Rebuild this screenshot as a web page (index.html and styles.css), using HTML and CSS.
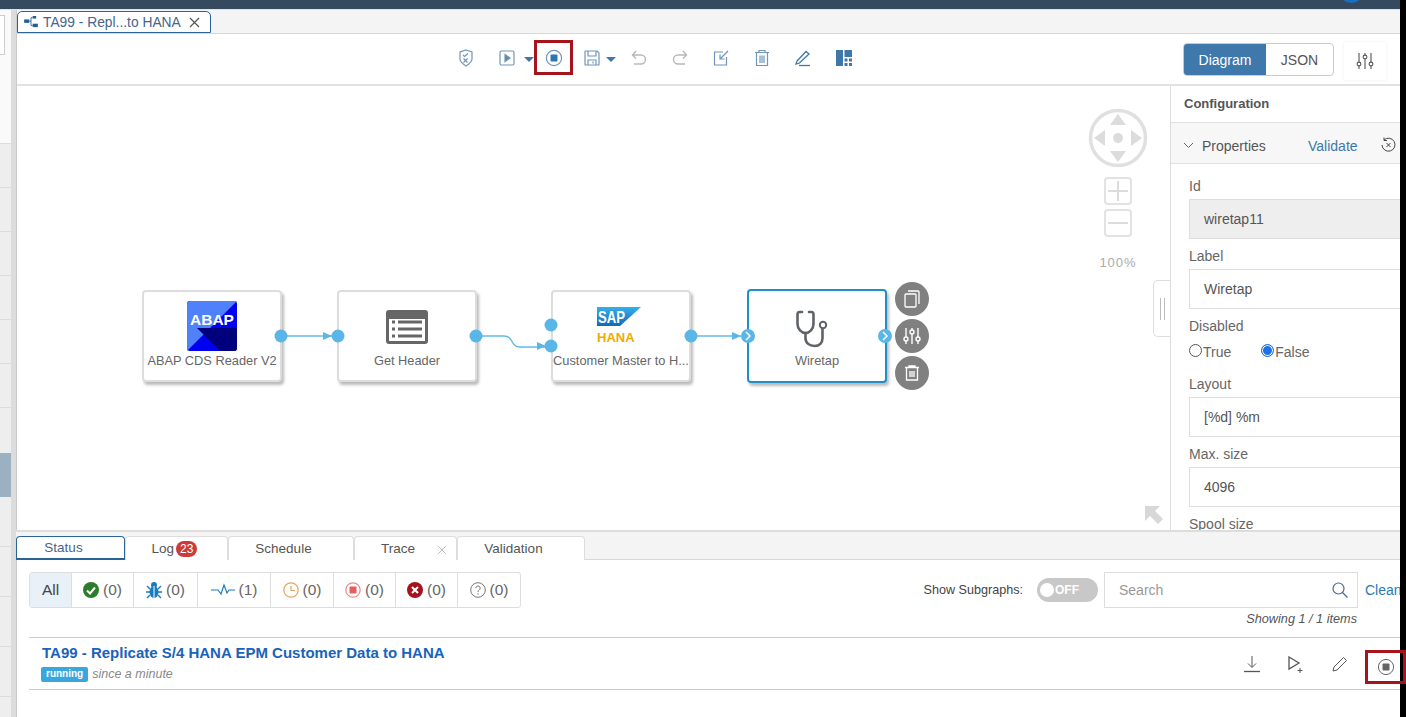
FILE: index.html
```html
<!DOCTYPE html>
<html lang="en">
<head>
<meta charset="UTF-8" />
<title>TA99 - Modeler</title>
<link rel="stylesheet" href="styles.css">
</head>
<body>
<div class="page">
  <div class="app">
    <div class="topbar"><span class="avatar"></span></div>
    <div class="workspace">
      <aside class="sidebar">
        <div class="side-row side-first"><span class="side-box"></span></div>
        <div class="side-row"></div>
        <div class="side-row"></div>
        <div class="side-row"></div>
        <div class="side-row"></div>
        <div class="side-row"></div>
        <div class="side-row"></div>
        <div class="side-row side-plain"></div>
        <div class="side-row side-selected"></div>
        <div class="side-row side-tall"></div>
        <div class="side-row side-tall"></div>
        <div class="side-row side-tall"></div>
        <div class="side-row side-tall"></div>
      </aside>
      <main class="main">
        <div class="doc-tabs">
          <div class="doc-tab">
            <svg class="doc-icon" width="14" height="12" viewBox="0 0 16 14"><rect x="0" y="4" width="6" height="4" fill="#1f5f99"/><rect x="10" y="0" width="4" height="3" fill="#1f5f99"/><rect x="10" y="9" width="6" height="4" fill="#1f5f99"/><path d="M6 6h2V2h2M8 6v5h2" fill="none" stroke="#1f5f99"/></svg>
            <span class="doc-title">TA99 - Repl...to HANA</span>
            <svg width="11" height="11" viewBox="0 0 11 11"><path d="M1 1l9 9M10 1l-9 9" stroke="#555" stroke-width="1.2"/></svg>
          </div>
        </div>

        <div class="toolbar">
          <div class="tb-btn">
            <svg width="20" height="20" viewBox="0 0 20 20" fill="none" stroke="#7195b8" stroke-width="1.2"><path d="M10 2l6 2v7c0 3-3 5-6 7-3-2-6-4-6-7V4z"/><path d="M7 7l1.5 1.5L12 5.5M7.5 10.5l4 4M11.5 10.5l-4 4"/></svg>
          </div>
          <div class="tb-group tb-play">
            <svg width="18" height="18" viewBox="0 0 18 18" fill="none" stroke="#7195b8" stroke-width="1.2"><rect x="2" y="2" width="14" height="14" rx="1.5"/><path d="M7 5.5l5 3.5-5 3.5z" fill="#5b86ad"/></svg>
            <span class="caret"></span>
          </div>
          <div class="tb-stop">
            <svg width="18" height="18" viewBox="0 0 18 18"><circle cx="9" cy="9" r="7.6" fill="none" stroke="#7195b8" stroke-width="1.2"/><rect x="5.5" y="5.5" width="7" height="7" rx="1" fill="#2f74b0"/></svg>
          </div>
          <div class="tb-group tb-save">
            <svg width="18" height="18" viewBox="0 0 18 18" fill="none" stroke="#7195b8" stroke-width="1.2"><path d="M2.5 2h11.500l2 2v11.500a.5.5 0 0 1-.5.5h-13a.5.5 0 0 1-.5-.5V2.500a.5.5 0 0 1 .5-.5z"/><path d="M5 2v5h8V2M5 16v-5h8v5M10 12.500v2"/></svg>
            <span class="caret"></span>
          </div>
          <div class="tb-btn">
            <svg width="18" height="18" viewBox="0 0 18 18" fill="none" stroke="#b9b9b9" stroke-width="1.4"><path d="M6 2L2.500 6 6 9.500M2.500 6H11a4.500 4.500 0 0 1 0 9H4"/></svg>
          </div>
          <div class="tb-btn">
            <svg width="18" height="18" viewBox="0 0 18 18" fill="none" stroke="#b9b9b9" stroke-width="1.4"><path d="M12 2l3.500 4L12 9.500M15.500 6H7a4.500 4.500 0 0 0 0 9h7"/></svg>
          </div>
          <div class="tb-btn">
            <svg width="18" height="18" viewBox="0 0 18 18" fill="none" stroke="#7195b8" stroke-width="1.2"><path d="M11 3H2.500v13h12V8"/><path d="M16 2l-8 8M8 5.500V10h4.500"/></svg>
          </div>
          <div class="tb-btn">
            <svg width="18" height="18" viewBox="0 0 18 18" fill="none" stroke="#7195b8" stroke-width="1.2"><path d="M2 3.500h14M6 3.500V1.500h6v2M3.500 3.500v13h11v-13M7 6.500v7.500M9 6.500v7.500M11 6.500v7.500"/></svg>
          </div>
          <div class="tb-btn">
            <svg width="18" height="18" viewBox="0 0 18 18" fill="none" stroke="#3f78a8" stroke-width="1.3"><path d="M3 12l9-9.500 3 2.500-9.500 9L2 15z"/><path d="M5 16.500h11"/></svg>
          </div>
          <div class="tb-btn">
            <svg width="16" height="16" viewBox="0 0 16 16" fill="#3f78a8"><rect x="0" y="0" width="7" height="16"/><rect x="8.500" y="0" width="7.500" height="7"/><rect x="8.500" y="8.500" width="3" height="3"/><rect x="13" y="8.500" width="3" height="3"/><rect x="8.500" y="13" width="3" height="3"/><rect x="13" y="13" width="3" height="3"/></svg>
          </div>
          <div class="tb-spacer"></div>
          <div class="view-switch">
            <span class="view-on">Diagram</span>
            <span class="view-off">JSON</span>
          </div>
          <div class="tb-settings">
            <svg width="18" height="18" viewBox="0 0 18 18" fill="none" stroke="#555" stroke-width="1.1"><path d="M3 1v9M3 14v3M9 1v2M9 7v10M15 1v9M15 14v3"/><circle cx="3" cy="12" r="1.900"/><circle cx="9" cy="5" r="1.900"/><circle cx="15" cy="12" r="1.900"/></svg>
          </div>
        </div>

        <div class="designer">
          <div class="canvas">
            <div class="node node-abap">
              <svg class="node-logo" width="50" height="50" viewBox="0 0 50 50">
                <rect width="50" height="50" rx="3" fill="#0000f0"/>
                <path d="M3 0h47L0 50V3a3 3 0 0 1 3-3z" fill="#4f82fa"/>
                <path d="M10 27H50V47a3 3 0 0 1-3 3H33z" fill="#00007c"/>
                <text x="25" y="24" class="abap-text">ABAP</text>
              </svg>
              <span class="node-label">ABAP CDS Reader V2</span>
            </div>
            <div class="node node-header">
              <svg class="node-logo" width="42" height="34" viewBox="0 0 42 34">
                <rect width="42" height="34" rx="3" fill="#666"/>
                <rect x="3" y="9" width="36" height="22" fill="#fff"/>
                <path d="M6 12h3M12 12h24M6 19h3M12 19h24M6 26h3M12 26h24" stroke="#666" stroke-width="3"/>
              </svg>
              <span class="node-label">Get Header</span>
            </div>
            <div class="node node-hana">
              <svg class="node-logo" width="46" height="37" viewBox="0 0 46 37">
                <defs><linearGradient id="sapblue" x1="0" y1="0" x2="0" y2="1"><stop offset="0" stop-color="#35b0ea"/><stop offset="1" stop-color="#1268b8"/></linearGradient></defs>
                <path d="M0 0h44L23 19H0z" fill="url(#sapblue)"/>
                <text x="1" y="16" class="sap-text" textLength="27" lengthAdjust="spacingAndGlyphs">SAP</text>
                <text x="0" y="35" class="hana-text">HANA</text>
              </svg>
              <span class="node-label">Customer Master to H...</span>
            </div>
            <div class="node node-wiretap">
              <svg class="node-logo" width="36" height="38" viewBox="0 0 36 38" fill="none" stroke="#5f6368" stroke-width="2.600" stroke-linecap="round"><path d="M6 2H3.500C2 2 1.500 3 1.500 4.500V14c0 5 4 9 8 9s8-4 8-9V4.500C17.500 3 17 2 15.500 2H13"/><path d="M9.500 23v5c0 5 4 8 9 8s8-3 8-8v-9"/><circle cx="27" cy="15" r="3.200" stroke-width="2"/></svg>
              <span class="node-label">Wiretap</span>
            </div>

            <svg class="links" width="1153" height="444" viewBox="17 86 1153 444">
              <g fill="none" stroke="#62bbe6" stroke-width="1.500">
                <path d="M281 336H332"/>
                <path d="M476 336h28c10 0 6 11 16 11h26"/>
                <path d="M691 336H741"/>
              </g>
              <g fill="#5ab6e6">
                <path d="M323 332l9 4-9 4z"/>
                <path d="M537 342l9 4-9 4z"/>
                <path d="M732 332l9 4-9 4z"/>
                <circle cx="281" cy="336" r="6.500"/>
                <circle cx="338" cy="336" r="6.500"/>
                <circle cx="476" cy="336" r="6.500"/>
                <circle cx="551" cy="325" r="6.500"/>
                <circle cx="551" cy="346" r="6.500"/>
                <circle cx="691" cy="336" r="6.500"/>
                <circle cx="748" cy="336" r="7"/>
                <circle cx="885" cy="336" r="7"/>
              </g>
              <path d="M746 332l4 4-4 4M883 332l4 4-4 4" fill="none" stroke="#fff" stroke-width="1.500"/>
            </svg>

            <div class="node-actions">
              <span class="node-action"><svg width="20" height="20" viewBox="0 0 20 20" fill="none" stroke="#fff" stroke-width="1.300"><rect x="3" y="5" width="11" height="13" rx="1"/><path d="M6 2h10a1 1 0 0 1 1 1v12"/></svg></span>
              <span class="node-action"><svg width="20" height="20" viewBox="0 0 20 20" fill="none" stroke="#fff" stroke-width="1.400"><path d="M4 2v9M4 15v3M10 2v2M10 8v10M16 2v9M16 15v3"/><circle cx="4" cy="13" r="2"/><circle cx="10" cy="6" r="2"/><circle cx="16" cy="13" r="2"/></svg></span>
              <span class="node-action"><svg width="20" height="20" viewBox="0 0 20 20" fill="none" stroke="#fff" stroke-width="1.300"><path d="M3 4.500h14M7 4.500V3h6v1.500M4.500 4.500V17h11V4.500M8 8v6M10 8v6M12 8v6"/></svg></span>
            </div>

            <div class="nav-control">
              <svg width="60" height="60" viewBox="0 0 60 60"><circle cx="30" cy="30" r="27.500" fill="#fff" stroke="#e0e0e0" stroke-width="3.500"/><path d="M30 6l8 11H22zM30 54l8-11H22zM6 30l11-8v16zM54 30l-11-8v16z" fill="#dcdcdc"/><circle cx="30" cy="30" r="5" fill="#dcdcdc"/></svg>
              <span class="zoom-btn"><svg width="20" height="20" viewBox="0 0 20 20"><path d="M10 0v20M0 10h20" stroke="#dcdcdc" stroke-width="2"/></svg></span>
              <span class="zoom-btn"><svg width="20" height="20" viewBox="0 0 20 20"><path d="M0 10h20" stroke="#dcdcdc" stroke-width="2"/></svg></span>
              <span class="zoom-pct">100%</span>
            </div>

            <svg class="fit-arrow" width="18" height="18" viewBox="0 0 18 18"><path d="M0 0h15l-5 5 8 8-5 5-8-8-5 5z" fill="#d8d8d8"/></svg>
            <div class="panel-handle"><i></i><i></i></div>
          </div>

          <div class="config">
            <div class="config-title">Configuration</div>
            <div class="config-head">
              <svg width="11" height="7" viewBox="0 0 11 7"><path d="M1 1l4.500 4.500L10 1" fill="none" stroke="#666" stroke-width="1"/></svg>
              <span class="config-props">Properties</span>
              <span class="config-validate">Validate</span>
              <svg width="17" height="17" viewBox="0 0 17 17" fill="none" stroke="#444" stroke-width="1"><path d="M4 3a6.500 6.500 0 1 1-2 5M4 .5V3.500h3M6.500 6l4 4M10.500 6l-4 4"/></svg>
            </div>
            <div class="form">
              <label class="f-label">Id</label>
              <div class="f-input f-readonly">wiretap11</div>
              <label class="f-label">Label</label>
              <div class="f-input">Wiretap</div>
              <label class="f-label">Disabled</label>
              <div class="f-radios">
                <span class="radio"></span><span class="radio-text">True</span>
                <span class="radio radio-on"></span><span class="radio-text">False</span>
              </div>
              <label class="f-label">Layout</label>
              <div class="f-input">[%d] %m</div>
              <label class="f-label">Max. size</label>
              <div class="f-input">4096</div>
              <label class="f-label">Spool size</label>
            </div>
          </div>
        </div>

        <div class="bottom-tabs">
          <span class="b-tab b-active b-status">Status</span>
          <span class="b-tab b-log">Log<em class="badge">23</em></span>
          <span class="b-tab b-schedule">Schedule</span>
          <span class="b-tab b-trace">Trace
            <svg width="10" height="10" viewBox="0 0 10 10"><path d="M1 1l8 8M9 1L1 9" stroke="#bbb" stroke-width="1"/></svg>
          </span>
          <span class="b-tab b-validation">Validation</span>
        </div>

        <section class="status">
          <div class="status-top">
            <div class="filters">
              <span class="filter filter-all">All</span>
              <span class="filter f-w61">
                <svg width="16" height="16" viewBox="0 0 16 16"><circle cx="8" cy="8" r="8" fill="#2b7d2b"/><path d="M4 8.500l3 3 5-6" fill="none" stroke="#fff" stroke-width="2"/></svg>(0)
              </span>
              <span class="filter f-w64">
                <svg width="16" height="18" viewBox="0 0 16 18" fill="#1b7bc0"><ellipse cx="8" cy="11" rx="4.500" ry="6"/><circle cx="8" cy="4" r="3"/><path d="M1 5l3 3M15 5l-3 3M0 11h4M16 11h-4M1 17l3-3M15 17l-3-3" stroke="#1b7bc0" stroke-width="1.400"/><path d="M8 5v12" stroke="#fff"/></svg>(0)
              </span>
              <span class="filter f-w73">
                <svg width="24" height="14" viewBox="0 0 24 14"><path d="M0 7h7l3 4 3-9 3 8 2-3h6" fill="none" stroke="#1b7bc0" stroke-width="1.200"/></svg>(1)
              </span>
              <span class="filter f-w63">
                <svg width="16" height="16" viewBox="0 0 16 16" fill="none" stroke="#e8a25a" stroke-width="1.200"><circle cx="8" cy="8" r="7.200"/><path d="M8 4v4.500h4"/></svg>(0)
              </span>
              <span class="filter f-w62">
                <svg width="16" height="16" viewBox="0 0 16 16"><circle cx="8" cy="8" r="7.200" fill="none" stroke="#ea8a8a" stroke-width="1.200"/><rect x="4.500" y="4.500" width="7" height="7" rx="1" fill="#e85c5c"/></svg>(0)
              </span>
              <span class="filter f-w62">
                <svg width="16" height="16" viewBox="0 0 16 16"><circle cx="8" cy="8" r="8" fill="#a5141c"/><path d="M5 5l6 6M11 5l-6 6" stroke="#fff" stroke-width="2"/></svg>(0)
              </span>
              <span class="filter f-w62 filter-last">
                <svg width="16" height="16" viewBox="0 0 16 16" fill="none" stroke="#777" stroke-width="1"><circle cx="8" cy="8" r="7.300"/><path d="M5.800 6.200a2.200 2.200 0 1 1 3.400 1.800C8.400 8.600 8 9 8 10M8 11.300v1.400"/></svg>(0)
              </span>
            </div>
            <div class="status-tools">
              <span class="sub-label">Show Subgraphs:</span>
              <span class="toggle"><i></i><b>OFF</b></span>
              <div class="search">
                <span>Search</span>
                <svg width="16" height="16" viewBox="0 0 16 16" fill="none" stroke="#4a6a8a" stroke-width="1.200"><circle cx="6.500" cy="6.500" r="5.500"/><path d="M10.500 10.500l5 5"/></svg>
              </div>
              <span class="cleanup">Cleanup</span>
            </div>
          </div>
          <div class="showing">Showing 1 / 1 items</div>
          <div class="graph-row">
            <div class="graph-info">
              <a class="graph-title">TA99 - Replicate S/4 HANA EPM Customer Data to HANA</a>
              <div class="graph-sub"><span class="tag">running</span><span class="since">since a minute</span></div>
            </div>
            <div class="graph-actions">
              <span class="act"><svg width="18" height="18" viewBox="0 0 18 18" fill="none" stroke="#555" stroke-width="1"><path d="M9 1v11M5 8.500L9 12.500l4-4"/><path d="M1 16.500h16" stroke-width="1.300"/></svg></span>
              <span class="act"><svg width="18" height="18" viewBox="0 0 18 18" fill="none" stroke="#555" stroke-width="1.300"><path d="M2 2l10 6-10 6z"/><path d="M13 13v5M10.500 15.500h5" stroke-width="1"/></svg></span>
              <span class="act"><svg width="16" height="16" viewBox="0 0 16 16" fill="none" stroke="#555" stroke-width="1"><path d="M2 11L11.500 1.500l3 3L5 14l-4 1z"/></svg></span>
              <span class="act act-stop"><svg width="18" height="18" viewBox="0 0 18 18"><circle cx="9" cy="9" r="7.600" fill="none" stroke="#666" stroke-width="1"/><rect x="5.500" y="5.500" width="7" height="7" rx="1" fill="#666"/></svg></span>
            </div>
          </div>
        </section>
      </main>
    </div>
  </div>
  <div class="edge"></div>
</div>
</body>
</html>
```

FILE: styles.css
```css
html, body {
  margin: 0;
  padding: 0;
  background: #fff;
}
body {
  font-family: "Liberation Sans", Arial, sans-serif;
  color: #555;
  overflow: hidden;
}
svg {
  display: block;
  flex: none;
}
.page {
  display: flex;
  width: 1406px;
  height: 717px;
  overflow: hidden;
}
.app {
  width: 1400px;
  display: flex;
  flex-direction: column;
}
.edge {
  width: 6px;
  background: #000;
}
.topbar {
  height: 9px;
  background: #354a5f;
  border-bottom: 1px solid #dfe3e6;
  position: relative;
  overflow: hidden;
  flex: none;
}
.avatar {
  position: absolute;
  left: 1339px;
  top: -22px;
  width: 25px;
  height: 25px;
  border-radius: 50%;
  background: #1b6fc0;
}
.workspace {
  flex: 1;
  display: flex;
  min-height: 0;
}

/* left list, only its edge is visible */
.sidebar {
  width: 11px;
  background: #eee;
  border-right: 5px solid #dcdcdc;
  flex: none;
}
.side-row {
  height: 44px;
  box-sizing: border-box;
  border-bottom: 1px solid #dcdcdc;
}
.side-first {
  height: 134px;
  background: #fafafa;
  padding-top: 5px;
}
.side-box {
  display: block;
  width: 4px;
  height: 38px;
  background: #fff;
  border: 1px solid #ccc;
  border-left: none;
}
.side-plain {
  height: 45px;
  border-bottom: none;
}
.side-selected {
  background: #9bb0c0;
  border-bottom: none;
}
.side-tall {
  height: 50px;
}

.main {
  flex: 1;
  min-width: 0;
  display: flex;
  flex-direction: column;
  border-left: 1px solid #ccc;
}

/* document tabs */
.doc-tabs {
  height: 24px;
  box-sizing: border-box;
  background: #f4f4f4;
  border-bottom: 1px solid #d8d8d8;
  padding-top: 1px;
  flex: none;
}
.doc-tab {
  width: 194px;
  height: 22px;
  box-sizing: border-box;
  background: #fff;
  border: 1px solid #2a6496;
  border-top-left-radius: 5px;
  border-top-right-radius: 5px;
  display: flex;
  align-items: center;
  padding-left: 6px;
}
.doc-title {
  font-size: 13.800px;
  color: #47658a;
  margin: 0 7px 0 5px;
  width: 139px;
  white-space: nowrap;
}

/* toolbar */
.toolbar {
  height: 52px;
  box-sizing: border-box;
  flex: none;
  display: flex;
  align-items: center;
  padding: 0 0 3px 428px;
  border-bottom: 2px solid #e2e2e2;
}
.tb-btn {
  width: 41px;
  display: flex;
  justify-content: center;
}
.tb-group {
  display: flex;
  align-items: center;
  box-sizing: border-box;
}
.tb-play {
  width: 48px;
  padding-left: 12px;
  gap: 8px;
}
.tb-save {
  width: 45px;
  padding-left: 10px;
  gap: 5px;
}
.caret {
  width: 0;
  height: 0;
  border-left: 5px solid transparent;
  border-right: 5px solid transparent;
  border-top: 5px solid #3f78a8;
  margin-top: 4px;
}
.tb-stop {
  width: 39px;
  height: 35px;
  box-sizing: border-box;
  border: 3px solid #a5141c;
  display: flex;
  align-items: center;
  justify-content: center;
}
.tb-spacer {
  flex: 1;
}
.view-switch {
  display: flex;
  width: 151px;
  height: 33px;
  margin-top: 4px;
  box-sizing: border-box;
  border: 1px solid #ccc;
  border-radius: 4px;
  font-size: 14px;
  overflow: hidden;
}
.view-on {
  width: 82px;
  background: #3f78ab;
  color: #fff;
  display: flex;
  align-items: center;
  justify-content: center;
}
.view-off {
  flex: 1;
  display: flex;
  align-items: center;
  justify-content: center;
  color: #555;
}
.tb-settings {
  width: 42px;
  height: 38px;
  margin: 7px 14px 0 10px;
  box-shadow: 0 0 3px #eee;
  display: flex;
  align-items: center;
  justify-content: center;
}

/* canvas and config */
.designer {
  height: 444px;
  flex: none;
  display: flex;
}
.canvas {
  position: relative;
  width: 1153px;
  flex: none;
}
.links {
  position: absolute;
  left: 0;
  top: 0;
  pointer-events: none;
}
.node {
  position: absolute;
  top: 204px;
  width: 140px;
  height: 92px;
  box-sizing: border-box;
  background: #fff;
  border: 2px solid #ddd;
  border-radius: 4px;
  box-shadow: 2px 3px 3px #bbb;
  display: flex;
  flex-direction: column;
  align-items: center;
}
.node-abap { left: 125px; padding-top: 9px; }
.node-header { left: 320px; padding-top: 18px; }
.node-hana { left: 534px; padding-top: 15px; }
.node-hana .node-logo { margin-right: 2px; }
.node-wiretap {
  left: 730px;
  top: 203px;
  height: 94px;
  border-color: #1f8fc4;
  border-radius: 4px;
  padding-top: 19px;
}
.node-wiretap .node-logo { margin-right: 7px; }
.node-label {
  font-size: 12.800px;
  color: #666;
  white-space: nowrap;
  position: absolute;
  left: 0;
  right: 0;
  top: 61px;
  text-align: center;
}
.node-wiretap .node-label { top: 62px; }
.abap-text {
  font: bold 15.500px "Liberation Sans", Arial, sans-serif;
  fill: #fff;
  text-anchor: middle;
}
.sap-text {
  font: bold 17px "Liberation Sans", Arial, sans-serif;
  fill: #fff;
}
.hana-text {
  font: bold 13px "Liberation Sans", Arial, sans-serif;
  fill: #f0ab00;
}
.node-actions {
  position: absolute;
  left: 878px;
  top: 196px;
  display: flex;
  flex-direction: column;
  gap: 3px;
}
.node-action {
  width: 34px;
  height: 34px;
  border-radius: 50%;
  background: #808080;
  display: flex;
  align-items: center;
  justify-content: center;
}
.nav-control {
  position: absolute;
  left: 1071px;
  top: 22px;
  width: 60px;
  display: flex;
  flex-direction: column;
  align-items: center;
}
.zoom-btn {
  width: 28px;
  height: 28px;
  box-sizing: border-box;
  border: 2px solid #e2e2e2;
  border-radius: 4px;
  display: flex;
  align-items: center;
  justify-content: center;
  margin-bottom: 4px;
}
.zoom-btn:first-of-type {
  margin-top: 9px;
}
.zoom-pct {
  font-size: 13px;
  letter-spacing: 1px;
  color: #aaa;
  margin-top: 14px;
}
.fit-arrow {
  position: absolute;
  left: 1128px;
  top: 420px;
}
.panel-handle {
  position: absolute;
  right: 0;
  top: 194px;
  width: 17px;
  height: 57px;
  box-sizing: border-box;
  background: #fff;
  border: 1px solid #ddd;
  border-right: none;
  border-radius: 5px 0 0 5px;
  display: flex;
  gap: 3px;
  align-items: center;
  justify-content: center;
}
.panel-handle i {
  width: 1px;
  height: 22px;
  background: #bbb;
}
.config {
  flex: 1;
  min-width: 0;
  border-left: 1px solid #ddd;
  overflow: hidden;
}
.config-title {
  height: 36px;
  padding-left: 13px;
  font-size: 13px;
  font-weight: bold;
  line-height: 36px;
  color: #555;
}
.config-head {
  height: 42px;
  box-sizing: border-box;
  background: #f7f7f7;
  border-top: 1px solid #e0e0e0;
  border-bottom: 1px solid #e0e0e0;
  display: flex;
  align-items: center;
  padding: 5px 0 0 12px;
  font-size: 14px;
}
.config-props {
  margin-left: 8px;
  width: 106px;
}
.config-validate {
  color: #3f78ab;
  width: 72px;
}
.form {
  padding: 14px 0 0 18px;
  margin-right: -2px;
}
.f-label {
  display: block;
  font-size: 14px;
  line-height: 16px;
  color: #666;
  margin-bottom: 5px;
}
.f-input {
  height: 40px;
  box-sizing: border-box;
  border: 1px solid #ddd;
  font-size: 14px;
  line-height: 38px;
  padding-left: 14px;
  color: #555;
  margin-bottom: 9px;
}
.f-readonly {
  background: #eee;
}
.f-radios {
  display: flex;
  align-items: center;
  font-size: 14px;
  color: #666;
  height: 20px;
  margin: 8px 0 14px;
}
.radio {
  width: 11px;
  height: 11px;
  border: 1px solid #555;
  border-radius: 50%;
  margin-top: -3px;
}
.radio-on {
  background: #1a73e8;
  border-color: #1a73e8;
  box-shadow: inset 0 0 0 1px #fff;
}
.radio-text {
  margin: 0 30px 0 1px;
}

/* status tabs */
.bottom-tabs {
  height: 30px;
  flex: none;
  box-sizing: border-box;
  background: #f4f4f4;
  border-top: 2px solid #ddd;
  border-bottom: 1px solid #d8d8d8;
  padding-top: 4px;
  display: flex;
  font-size: 13.500px;
  margin-left: -1px;
}
.b-tab {
  height: 24px;
  box-sizing: border-box;
  background: #fff;
  border: 1px solid #ddd;
  border-bottom: none;
  border-radius: 4px 4px 0 0;
  display: flex;
  align-items: center;
  justify-content: center;
  color: #555;
  position: relative;
}
.b-status { width: 109px; border: 1px solid #2a6496; border-bottom-width: 2px; color: #47658a; padding-right: 14px; }
.b-log { width: 103px; padding-right: 4px; }
.b-schedule { width: 126px; padding-right: 15px; }
.b-trace { width: 103px; padding-right: 15px; }
.b-trace svg { position: absolute; right: 9px; top: 8px; }
.b-validation { width: 128px; padding-right: 15px; }
.badge {
  font-style: normal;
  background: #cc3a3a;
  color: #fff;
  font-size: 12px;
  border-radius: 8px;
  padding: 1px 4px;
  margin-left: 2px;
}

.status {
  flex: 1;
  padding: 12px 0 0 12px;
}
.status-top {
  display: flex;
  align-items: center;
  height: 36px;
}
.filters {
  display: flex;
  height: 36px;
  box-sizing: border-box;
  border: 1px solid #ddd;
  border-radius: 3px;
  font-size: 15.500px;
  color: #666;
}
.filter {
  display: flex;
  align-items: center;
  justify-content: center;
  gap: 4px;
  border-right: 1px solid #ddd;
  box-sizing: border-box;
}
.filter-all {
  width: 42px;
  background: #e8f0f8;
  color: #444;
}
.filter-last { border-right: none; }
.f-w61 { width: 62px; }
.f-w64 { width: 64px; }
.f-w73 { width: 73px; }
.f-w63 { width: 63px; }
.f-w62 { width: 62px; }
.status-tools {
  margin-left: auto;
  display: flex;
  align-items: center;
}
.sub-label {
  font-size: 12.600px;
  color: #444;
}
.toggle {
  width: 61px;
  height: 24px;
  margin: 0 6px 0 14px;
  background: #c8c8c8;
  border-radius: 12px;
  display: flex;
  align-items: center;
  padding-left: 3px;
  box-sizing: border-box;
  color: #fff;
  font-size: 12px;
}
.toggle i {
  width: 14px;
  height: 14px;
  background: #fff;
  border-radius: 50%;
  margin-right: 1px;
}
.search {
  width: 254px;
  height: 36px;
  box-sizing: border-box;
  border: 1px solid #ddd;
  display: flex;
  align-items: center;
  justify-content: space-between;
  padding: 0 9px 0 14px;
  font-size: 14px;
  color: #999;
}
.cleanup {
  width: 35px;
  margin-left: 7px;
  font-size: 14px;
  color: #2a7ab0;
  overflow: hidden;
  white-space: nowrap;
}
.showing {
  text-align: right;
  font-size: 12.700px;
  font-style: italic;
  color: #555;
  padding-right: 43px;
  margin-top: 4px;
  line-height: 14px;
}
.graph-row {
  margin-top: 11px;
  height: 53px;
  box-sizing: border-box;
  border-top: 1px solid #ccc;
  border-bottom: 1px solid #ccc;
  display: flex;
  justify-content: space-between;
  align-items: center;
}
.graph-info {
  padding: 0 0 2px 13px;
}
.graph-title {
  display: block;
  font-size: 15px;
  font-weight: bold;
  color: #1a63b8;
  line-height: 18px;
}
.graph-sub {
  display: flex;
  align-items: center;
  margin-top: 5px;
}
.tag {
  background: #3aa7dc;
  color: #fff;
  font-size: 10px;
  font-weight: bold;
  border-radius: 2px;
  padding: 1px 5px 2px;
  margin-right: 4px;
  line-height: 12px;
  margin-left: -1px;
}
.since {
  font-size: 12.500px;
  font-style: italic;
  color: #888;
}
.graph-actions {
  display: flex;
  align-items: center;
  gap: 26px;
}
.act {
  width: 18px;
  display: flex;
  justify-content: center;
}
.act-stop {
  width: 41px;
  height: 34px;
  box-sizing: border-box;
  border: 3px solid #a5141c;
  align-items: center;
  margin: 6px -6px 0 -10px;
  position: relative;
  z-index: 4;
}
```
